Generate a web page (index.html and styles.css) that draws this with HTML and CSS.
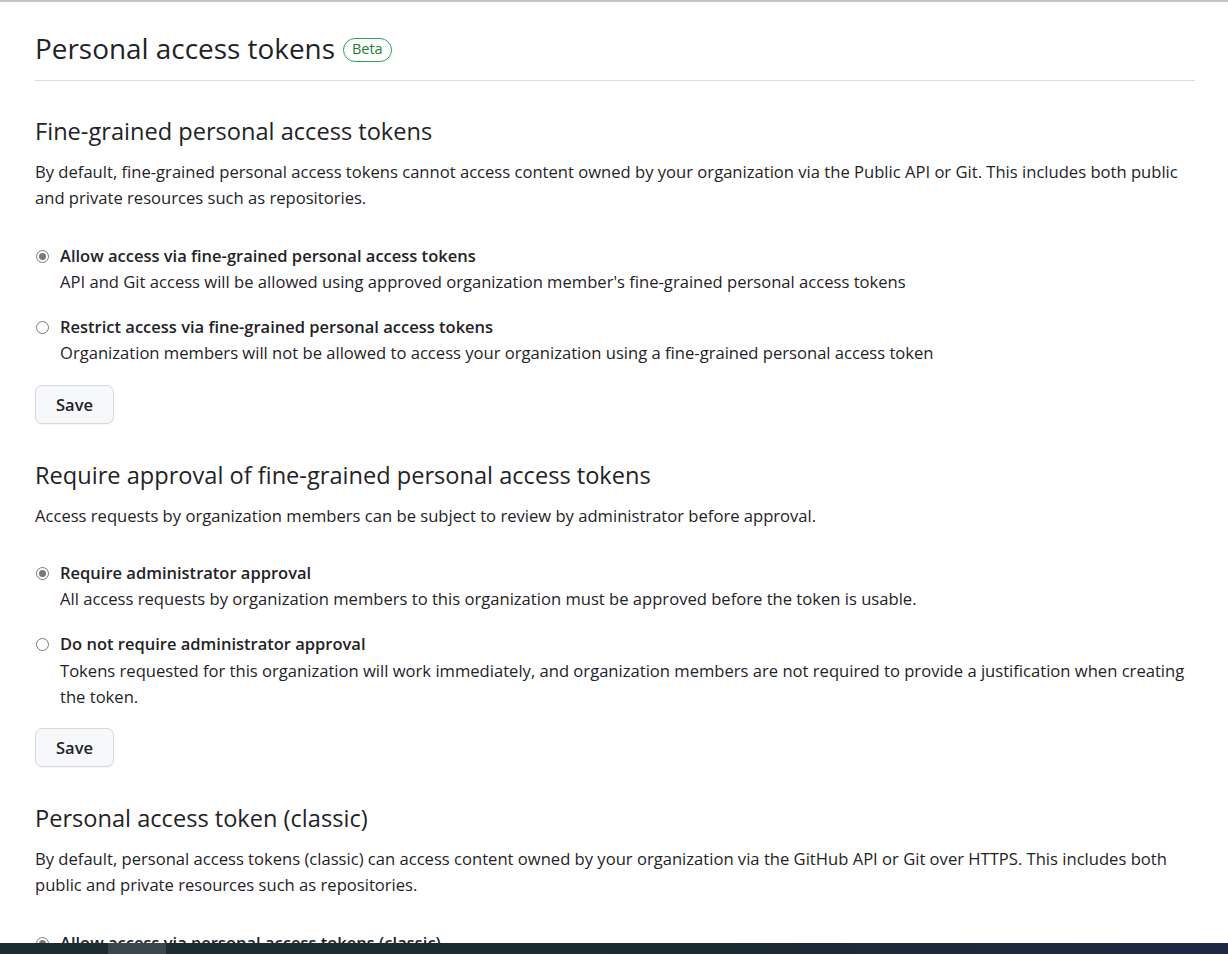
FILE: index.html
```html
<!DOCTYPE html>
<html lang="en">
<head>
<meta charset="utf-8">
<title>Personal access tokens</title>
<link rel="stylesheet" href="styles.css">
</head>
<body>
<div class="page">
  <div class="pagehead">
    <h1 class="pagehead-title">Personal access tokens</h1>
    <span class="badge">Beta</span>
  </div>

  <section class="section">
    <h2 class="subhead">Fine-grained personal access tokens</h2>
    <p class="lead">By default, fine-grained personal access tokens cannot access content owned by your organization via the Public API or Git. This includes both public and private resources such as repositories.</p>
    <div class="options">
      <label class="option">
        <span class="radio checked"></span>
        <span class="option-body">
          <span class="option-title">Allow access via fine-grained personal access tokens</span>
          <span class="option-note">API and Git access will be allowed using approved organization member's fine-grained personal access tokens</span>
        </span>
      </label>
      <label class="option">
        <span class="radio"></span>
        <span class="option-body">
          <span class="option-title">Restrict access via fine-grained personal access tokens</span>
          <span class="option-note">Organization members will not be allowed to access your organization using a fine-grained personal access token</span>
        </span>
      </label>
    </div>
    <button class="btn" type="button">Save</button>
  </section>

  <section class="section">
    <h2 class="subhead">Require approval of fine-grained personal access tokens</h2>
    <p class="lead">Access requests by organization members can be subject to review by administrator before approval.</p>
    <div class="options">
      <label class="option">
        <span class="radio checked"></span>
        <span class="option-body">
          <span class="option-title">Require administrator approval</span>
          <span class="option-note">All access requests by organization members to this organization must be approved before the token is usable.</span>
        </span>
      </label>
      <label class="option">
        <span class="radio"></span>
        <span class="option-body">
          <span class="option-title">Do not require administrator approval</span>
          <span class="option-note">Tokens requested for this organization will work immediately, and organization members are not required to provide a justification when creating the token.</span>
        </span>
      </label>
    </div>
    <button class="btn" type="button">Save</button>
  </section>

  <section class="section">
    <h2 class="subhead">Personal access token (classic)</h2>
    <p class="lead">By default, personal access tokens (classic) can access content owned by your organization via the GitHub API or Git over HTTPS. This includes both public and private resources such as repositories.</p>
    <div class="options">
      <label class="option">
        <span class="radio checked"></span>
        <span class="option-body">
          <span class="option-title">Allow access via personal access tokens (classic)</span>
        </span>
      </label>
    </div>
  </section>
</div>
<div class="taskbar">
  <span class="task task-active"></span>
</div>
</body>
</html>
```

FILE: styles.css
```css
html, body {
  margin: 0;
  padding: 0;
  background: #ffffff;
}

body {
  font-family: "Open Sans", "Noto Sans", sans-serif;
  color: #1f2328;
  font-size: 16.6px;
  line-height: 26.25px;
  border-top: 2px solid #c6c6c6;
  overflow: hidden;
  height: 952px;
}

.page {
  padding: 0 33px 0 35px;
}

.pagehead {
  display: flex;
  align-items: center;
  gap: 8px;
  padding-top: 27px;
  padding-bottom: 13px;
  border-bottom: 1px solid #d8dee4;
}

.pagehead-title {
  margin: 0;
  font-size: 27.9px;
  line-height: 38px;
  font-weight: 400;
}

.badge {
  display: inline-flex;
  align-items: center;
  box-sizing: border-box;
  height: 24px;
  padding: 0 8px;
  border: 1px solid #2da44e;
  border-radius: 12px;
  color: #1a7f37;
  font-size: 14.5px;
  font-weight: 500;
  line-height: 1;
  margin-top: 3px;
}

.section {
  padding-top: 36px;
}

.subhead {
  margin: 0;
  font-size: 23.6px;
  line-height: 30px;
  font-weight: 400;
}

.lead {
  margin: 13px 0 0;
}

.options {
  display: flex;
  flex-direction: column;
  gap: 19px;
  margin-top: 31px;
}

.pagehead + .section {
  padding-top: 35px;
}

.option {
  display: flex;
  align-items: flex-start;
  gap: 11px;
}

.radio {
  flex: none;
  width: 13px;
  height: 13px;
  box-sizing: border-box;
  border: 1px solid #7a7a7a;
  border-radius: 50%;
  margin-top: 7px;
  margin-left: 1px;
  background: #fff;
  display: flex;
  align-items: center;
  justify-content: center;
}

.radio.checked::after {
  content: "";
  width: 7px;
  height: 7px;
  border-radius: 50%;
  background: #7a7a7a;
}

.option-body {
  display: flex;
  flex-direction: column;
}

.option-title {
  font-weight: 600;
  font-size: 16.5px;
}

.btn {
  display: block;
  margin-top: 18px;
  width: 79px;
  height: 39px;
  border: 1px solid #d5d9de;
  border-radius: 7px;
  background: #f6f8fa;
  color: #1f2328;
  font-family: inherit;
  font-size: 16.5px;
  font-weight: 600;
  box-shadow: 0 1px 0 rgba(31, 35, 40, 0.04);
  padding: 0;
}

.taskbar {
  position: fixed;
  left: 0;
  right: 0;
  bottom: 0;
  height: 11px;
  background: linear-gradient(90deg, #1d2c33 0%, #1c2a32 60%, #1f2844 100%);
}

.task {
  position: absolute;
  top: 0;
  bottom: 0;
}

.task-active {
  left: 108px;
  width: 58px;
  background: #3a474d;
}
```
